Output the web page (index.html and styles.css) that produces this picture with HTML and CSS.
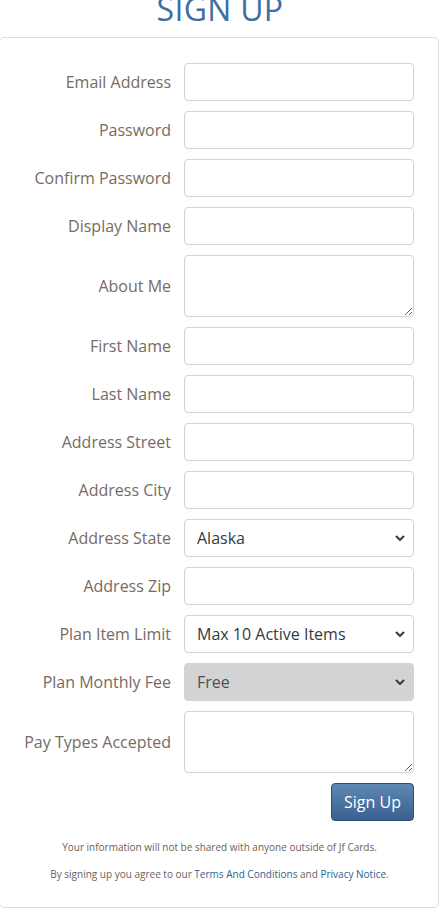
FILE: index.html
```html
<!DOCTYPE html>
<html>
<head>
<meta charset="utf-8">
<link rel="stylesheet" href="styles.css">
</head>
<body>
<h1 class="title">SIGN UP</h1>
<div class="card">
  <form class="form">
    <label class="lbl">Email Address</label><input class="ctl" type="text">
    <label class="lbl">Password</label><input class="ctl" type="password">
    <label class="lbl">Confirm Password</label><input class="ctl" type="password">
    <label class="lbl">Display Name</label><input class="ctl" type="text">
    <label class="lbl">About Me</label><textarea class="ctl area"></textarea>
    <label class="lbl">First Name</label><input class="ctl" type="text">
    <label class="lbl">Last Name</label><input class="ctl" type="text">
    <label class="lbl">Address Street</label><input class="ctl" type="text">
    <label class="lbl">Address City</label><input class="ctl" type="text">
    <label class="lbl">Address State</label>
    <div class="sel"><span>Alaska</span><svg class="chev" viewBox="0 0 10 6" width="10" height="6"><path d="M1 1l4 4 4-4" fill="none" stroke="#343a40" stroke-width="2"/></svg></div>
    <label class="lbl">Address Zip</label><input class="ctl" type="text">
    <label class="lbl">Plan Item Limit</label>
    <div class="sel"><span>Max 10 Active Items</span><svg class="chev" viewBox="0 0 10 6" width="10" height="6"><path d="M1 1l4 4 4-4" fill="none" stroke="#343a40" stroke-width="2"/></svg></div>
    <label class="lbl">Plan Monthly Fee</label>
    <div class="sel disabled"><span>Free</span><svg class="chev" viewBox="0 0 10 6" width="10" height="6"><path d="M1 1l4 4 4-4" fill="none" stroke="#343a40" stroke-width="2"/></svg></div>
    <label class="lbl">Pay Types Accepted</label><textarea class="ctl area"></textarea>
    <div class="actions"><button class="btn" type="button">Sign Up</button></div>
  </form>
  <p class="note">Your information will not be shared with anyone outside of Jf Cards.</p>
  <p class="note">By signing up you agree to our <a class="lnk">Terms And Conditions</a> and <a class="lnk">Privacy Notice</a>.</p>
</div>
</body>
</html>
```
FILE: styles.css
```css
html, body {
  margin: 0;
  padding: 0;
  background: #fff;
  font-family: "Open Sans", "Liberation Sans", sans-serif;
}
body {
  overflow: hidden;
}
.title {
  margin: -13px 0 0 0;
  height: 50px;
  line-height: 44px;
  text-align: center;
  font-size: 32px;
  font-weight: 400;
  color: #3f6ea3;
  letter-spacing: 0.3px;
}
.card {
  box-sizing: border-box;
  margin-left: -1px;
  width: 440px;
  border: 1px solid #dcdcdc;
  border-radius: 5px;
  padding: 25px 24px 0 0;
  height: 871px;
}
.form {
  display: grid;
  grid-template-columns: 171px 230px;
  column-gap: 13px;
  row-gap: 10px;
  align-items: center;
  margin: 0;
}
.lbl {
  text-align: right;
  font-size: 16px;
  color: #776b63;
  white-space: nowrap;
}
.ctl {
  box-sizing: border-box;
  display: block;
  width: 230px;
  height: 38px;
  margin: 0;
  border: 1px solid #ced4da;
  border-radius: 4px;
  background: #fff;
  font-family: inherit;
  font-size: 16px;
  padding: 6px 12px;
}
.area {
  height: 62px;
  resize: vertical;
}
.sel {
  box-sizing: border-box;
  width: 230px;
  height: 38px;
  border: 1px solid #ced4da;
  border-radius: 4px;
  background: #fff;
  display: flex;
  align-items: center;
  justify-content: space-between;
  padding: 0 8px 0 12px;
  font-size: 16px;
  color: #343a40;
}
.sel.disabled {
  background: #d3d3d3;
  border-color: #d3d3d3;
  color: #495057;
}
.chev {
  display: block;
}
.actions {
  grid-column: 2;
  display: flex;
  justify-content: flex-end;
}
.btn {
  box-sizing: border-box;
  width: 83px;
  height: 38px;
  border: 1px solid #2e4f78;
  border-radius: 4px;
  background: linear-gradient(#5e88b4, #3a608f);
  color: #fff;
  font-family: inherit;
  font-size: 16px;
  padding: 0;
}
.note {
  margin: 0;
  text-align: center;
  font-size: 10px;
  line-height: 14px;
  color: #6b625c;
  padding-left: 25px;
}
.form + .note {
  margin-top: 19px;
}
.note + .note {
  margin-top: 13px;
}
.lnk {
  color: #2f5f8f;
  text-decoration: none;
}
```
